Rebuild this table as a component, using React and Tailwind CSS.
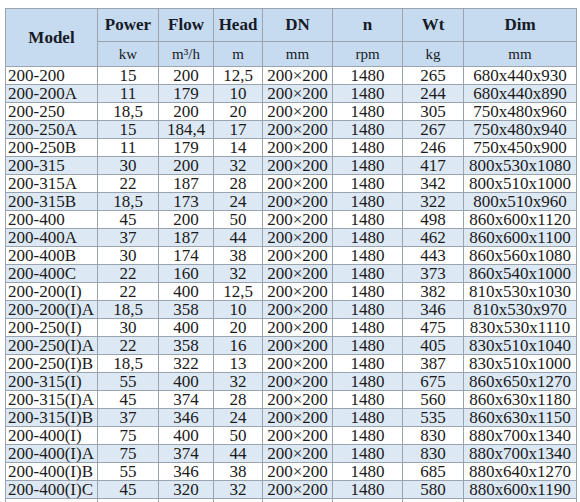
const rows = [
  ["200-200", "15", "200", "12,5", "265", "680x440x930"],
  ["200-200A", "11", "179", "10", "244", "680x440x890"],
  ["200-250", "18,5", "200", "20", "305", "750x480x960"],
  ["200-250A", "15", "184,4", "17", "267", "750x480x940"],
  ["200-250B", "11", "179", "14", "246", "750x450x900"],
  ["200-315", "30", "200", "32", "417", "800x530x1080"],
  ["200-315A", "22", "187", "28", "342", "800x510x1000"],
  ["200-315B", "18,5", "173", "24", "322", "800x510x960"],
  ["200-400", "45", "200", "50", "498", "860x600x1120"],
  ["200-400A", "37", "187", "44", "462", "860x600x1100"],
  ["200-400B", "30", "174", "38", "443", "860x560x1080"],
  ["200-400C", "22", "160", "32", "373", "860x540x1000"],
  ["200-200(I)", "22", "400", "12,5", "382", "810x530x1030"],
  ["200-200(I)A", "18,5", "358", "10", "346", "810x530x970"],
  ["200-250(I)", "30", "400", "20", "475", "830x530x1110"],
  ["200-250(I)A", "22", "358", "16", "405", "830x510x1040"],
  ["200-250(I)B", "18,5", "322", "13", "387", "830x510x1000"],
  ["200-315(I)", "55", "400", "32", "675", "860x650x1270"],
  ["200-315(I)A", "45", "374", "28", "560", "860x630x1180"],
  ["200-315(I)B", "37", "346", "24", "535", "860x630x1150"],
  ["200-400(I)", "75", "400", "50", "830", "880x700x1340"],
  ["200-400(I)A", "75", "374", "44", "830", "880x700x1340"],
  ["200-400(I)B", "55", "346", "38", "685", "880x640x1270"],
  ["200-400(I)C", "45", "320", "32", "580", "880x600x1190"],
];

const heads = [
  ["Power", "kw"],
  ["Flow", "m³/h"],
  ["Head", "m"],
  ["DN", "mm"],
  ["n", "rpm"],
  ["Wt", "kg"],
  ["Dim", "mm"],
];

const cell = "border border-[#9aa4b0] p-0 text-center font-['Liberation_Serif',serif]";

export default function App() {
  return (
    <div className="h-[502px] w-[580px] overflow-hidden bg-white pl-[5px] pt-[8px] font-['Liberation_Serif',serif] text-[#1a1a1a]">
      <table className="w-[571px] table-fixed border-collapse">
        <colgroup>
          <col className="w-[92px]" />
          <col className="w-[61px]" />
          <col className="w-[55px]" />
          <col className="w-[49px]" />
          <col className="w-[70px]" />
          <col className="w-[70px]" />
          <col className="w-[61px]" />
          <col className="w-[113px]" />
        </colgroup>
        <thead className="bg-[#c6daf0] text-[#161b26]">
          <tr className="h-[33px]">
            <th rowSpan={2} className={`${cell} text-[17px] font-bold`}>Model</th>
            {heads.map((h, i) => (
              <th key={i} className={`${cell} text-[17px] font-bold`}>{h[0]}</th>
            ))}
          </tr>
          <tr className="h-[25px]">
            {heads.map((h, i) => (
              <td key={i} className={`${cell} text-[15px]`}>{h[1]}</td>
            ))}
          </tr>
        </thead>
        <tbody className="text-[17px] leading-none">
          {rows.map((r, i) => (
            <tr key={i} className={`h-[17.83px] ${i % 2 ? "bg-[#dde8f5]" : "bg-white"}`}>
              <td className={`${cell} pl-[2px] text-left whitespace-nowrap`}>{r[0]}</td>
              <td className={cell}>{r[1]}</td>
              <td className={cell}>{r[2]}</td>
              <td className={cell}>{r[3]}</td>
              <td className={cell}>200×200</td>
              <td className={cell}>1480</td>
              <td className={cell}>{r[4]}</td>
              <td className={cell}>{r[5]}</td>
            </tr>
          ))}
          <tr className="h-[18px] bg-white">
            {Array.from({ length: 8 }).map((_, i) => (
              <td key={i} className={cell}>&nbsp;</td>
            ))}
          </tr>
        </tbody>
      </table>
    </div>
  );
}
